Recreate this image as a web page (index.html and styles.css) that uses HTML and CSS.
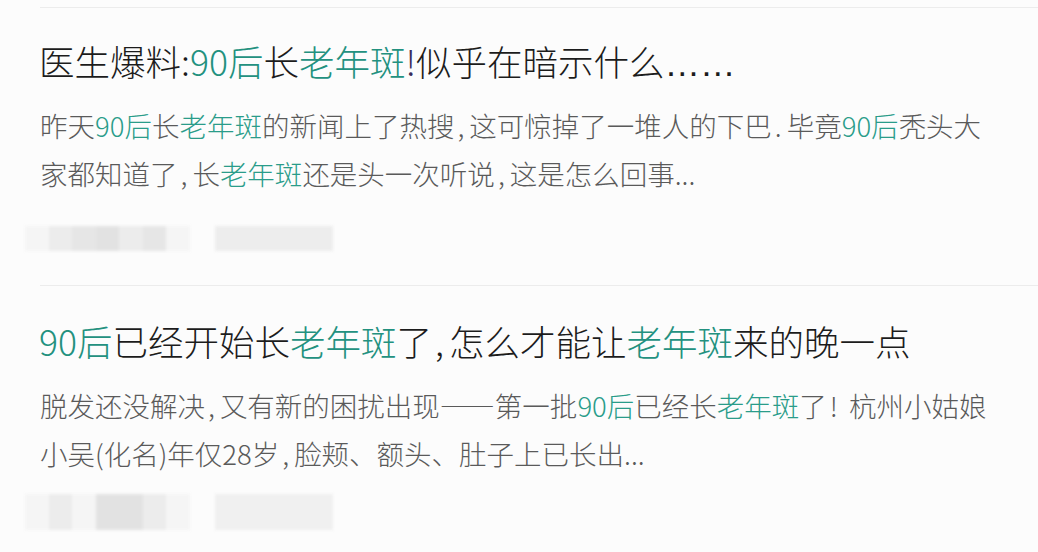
FILE: index.html
```html
<!DOCTYPE html>
<html lang="zh-CN">
<head>
<meta charset="utf-8">
<title>搜索结果</title>
<link rel="stylesheet" href="styles.css">
</head>
<body>
<div class="list">
  <div class="item item-first">
    <h3 class="title">医生爆料:<em>90后</em>长<em>老年斑</em><span class="bang">!</span>似乎在暗示什么<span class="ell">……</span></h3>
    <p class="desc">昨天<em>90后</em>长<em>老年斑</em>的新闻上了热搜<span class="pn">,</span>这可惊掉了一堆人的下巴<span class="pn">.</span>毕竟<em>90后</em>秃头大<br>家都知道了<span class="pn">,</span>长<em>老年斑</em>还是头一次听说<span class="pn">,</span>这是怎么回事...</p>
    <div class="meta">
      <div class="blur-group">
        <span class="px s1"></span><span class="px s2"></span><span class="px s3"></span><span class="px s4"></span><span class="px s2"></span><span class="px s3"></span><span class="px s1"></span>
      </div>
      <div class="blur-block b1"></div>
    </div>
  </div>
  <div class="item item-second">
    <h3 class="title"><em>90后</em>已经开始长<em>老年斑</em>了<span class="pn">,</span>怎么才能让<em>老年斑</em>来的晚一点</h3>
    <p class="desc">脱发还没解决<span class="pn">,</span>又有新的困扰出现——第一批<em>90后</em>已经长<em>老年斑</em>了<span class="pn">!</span> 杭州小姑娘<br>小吴(化名)年仅28岁<span class="pn">,</span>脸颊、额头、肚子上已长出...</p>
    <div class="meta meta-tall">
      <div class="blur-group">
        <span class="px s1"></span><span class="px s2"></span><span class="px s1"></span><span class="px s4"></span><span class="px s4"></span><span class="px s2"></span><span class="px s1"></span>
      </div>
      <div class="blur-block b2"></div>
    </div>
  </div>
</div>
</body>
</html>
```

FILE: styles.css
```css
html, body {
  margin: 0;
  padding: 0;
  background: #fcfcfc;
}

body {
  font-family: "Noto Sans CJK SC", "Noto Sans", sans-serif;
  width: 1038px;
  height: 552px;
  overflow: hidden;
}

.list {
  padding-top: 7px;
  padding-left: 40px;
}

.item {
  border-top: 1px solid #ececec;
}

.item-first {
  padding-top: 31px;
  padding-bottom: 34px;
}

.item-second {
  padding-top: 33px;
}

.title {
  margin: 0 0 0 -1px;
  font-size: 35.5px;
  line-height: 44px;
  font-weight: 300;
  color: #1c1c1c;
  white-space: nowrap;
}

.title em {
  font-style: normal;
  color: #23917f;
}

.title .bang {
  color: #3a2c5c;
}

.title .pn {
  padding: 0 5px 0 3px;
}

.title .ell {
  font-family: "Liberation Sans", sans-serif;
}

.desc {
  margin: 15px 0 0 0;
  font-size: 27.5px;
  line-height: 48px;
  font-weight: 300;
  color: #5a5a5a;
  white-space: nowrap;
}

.desc .pn {
  padding: 0 5px 0 3px;
}

.item-second .desc {
  margin-top: 18px;
}

.desc em {
  font-style: normal;
  color: #2a9c8a;
}

.meta {
  display: flex;
  align-items: stretch;
  gap: 25px;
  height: 25px;
  margin-top: 29px;
  margin-left: -15px;
  filter: blur(1.5px);
}

.meta-tall {
  height: 36px;
  margin-top: 17px;
}

.blur-group {
  display: flex;
  width: 165px;
}

.px {
  flex: 1;
}

.s1 { background: #f5f5f5; }
.s2 { background: #ececec; }
.s3 { background: #e6e6e6; }
.s4 { background: #e2e2e2; }

.blur-block {
  background: #ededed;
}

.b1 {
  width: 118px;
}

.b2 {
  width: 118px;
  background: #f0f0f0;
}
```
